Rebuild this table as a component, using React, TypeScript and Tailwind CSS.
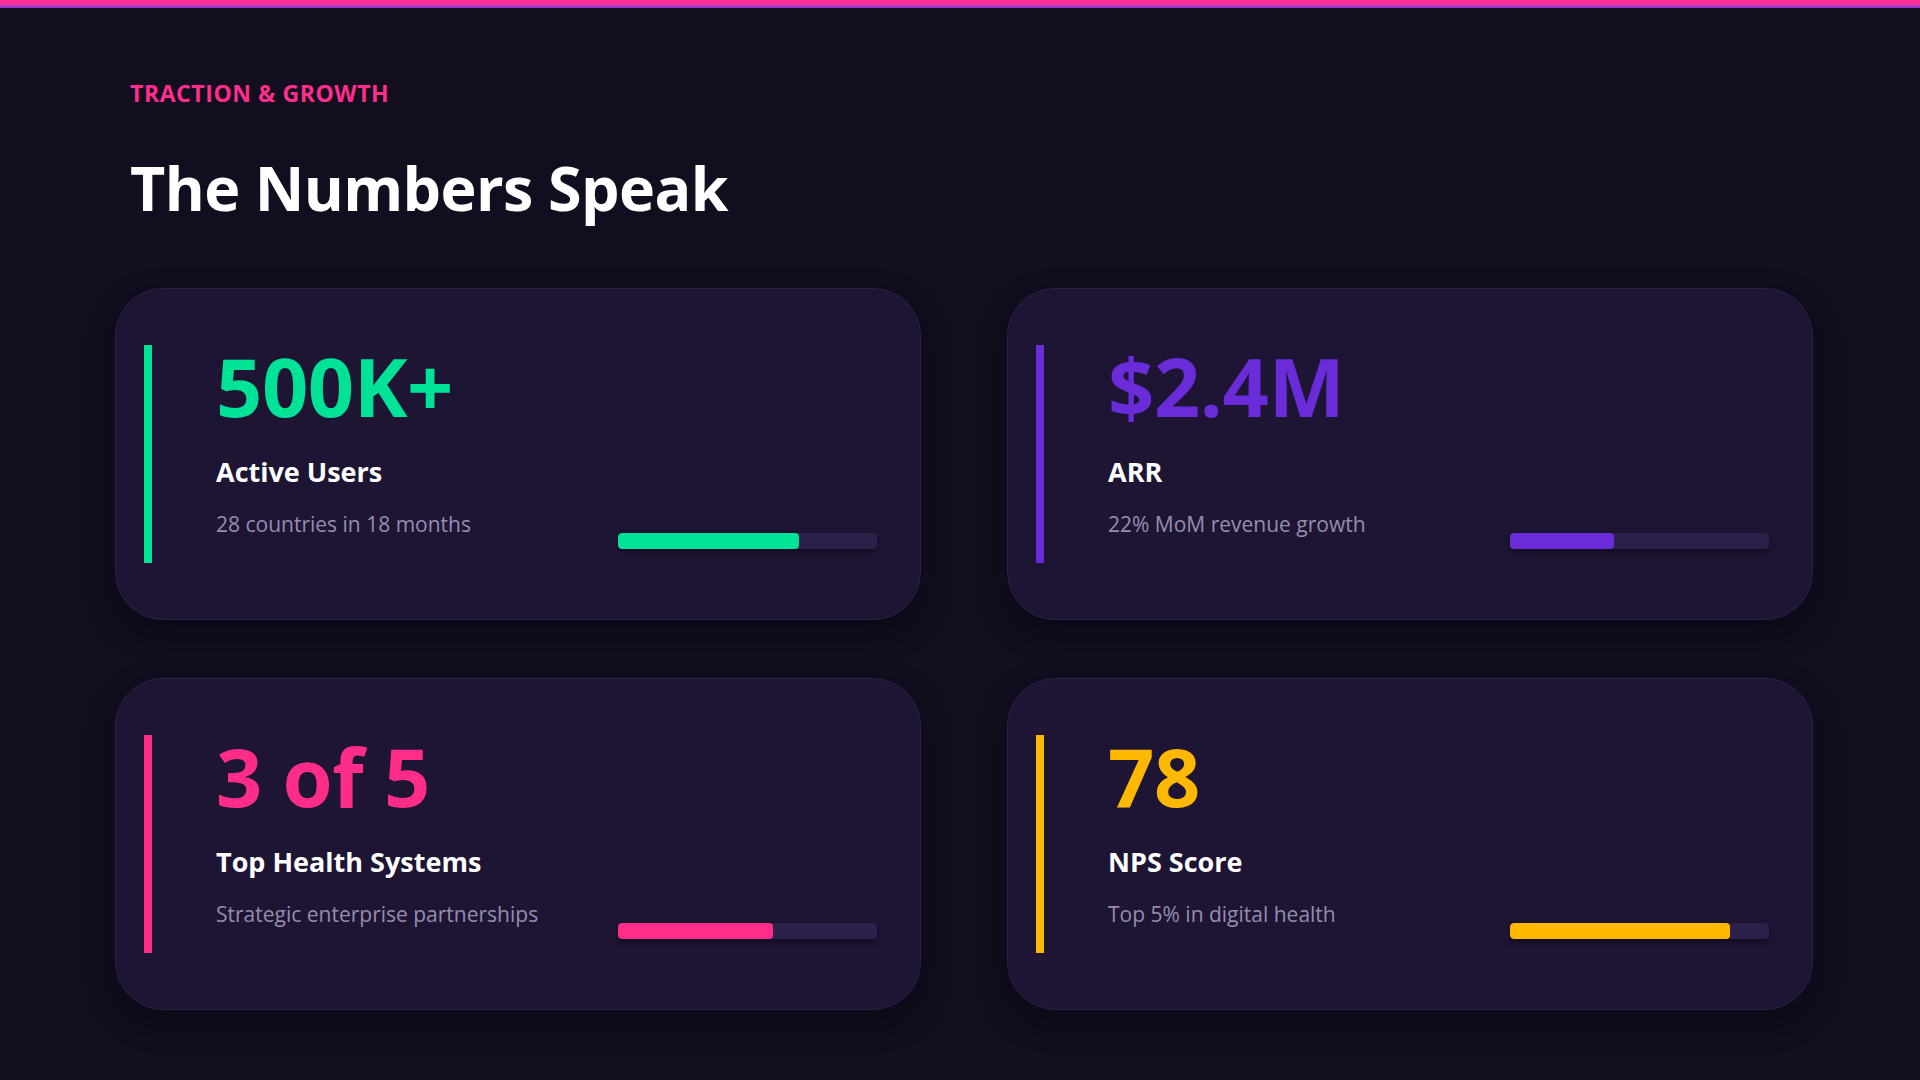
const METRICS = [
  {
    value: "500K+",
    label: "Active Users",
    note: "28 countries in 18 months",
    text: "text-[#00e396]",
    bar: "border-[#00e396]",
    fill: "bg-[#00e396]",
    pct: 70,
  },
  {
    value: "$2.4M",
    label: "ARR",
    note: "22% MoM revenue growth",
    text: "text-[#6a2bd9]",
    bar: "border-[#6a2bd9]",
    fill: "bg-[#6a2bd9]",
    pct: 40,
  },
  {
    value: "3 of 5",
    label: "Top Health Systems",
    note: "Strategic enterprise partnerships",
    text: "text-[#ff2d87]",
    bar: "border-[#ff2d87]",
    fill: "bg-[#ff2d87]",
    pct: 60,
  },
  {
    value: "78",
    label: "NPS Score",
    note: "Top 5% in digital health",
    text: "text-[#ffb800]",
    bar: "border-[#ffb800]",
    fill: "bg-[#ffb800]",
    pct: 85,
  },
];

type Metric = (typeof METRICS)[number];

function MetricCard({ m }: { m: Metric }) {
  return (
    <div className="flex h-[332px] items-center rounded-[48px] border border-[#2a2248] bg-[#1e1535] pl-[28px] pr-[43px] shadow-[0_12px_30px_rgba(0,0,0,0.35)]">
      <div className="flex flex-1 items-end justify-between">
        <div className={`border-l-8 ${m.bar} pl-[64px] pb-[22px]`}>
          <div className={`text-[81px] font-bold leading-none tracking-[-0.005em] ${m.text}`}>
            {m.value}
          </div>
          <div className="mt-[30px] text-[27px] font-bold leading-[1.2] text-white">
            {m.label}
          </div>
          <div className="mt-[21px] text-[21px] leading-[1.5] text-[#968dae]">
            {m.note}
          </div>
        </div>
        <div className="mb-[14px] h-4 w-[259px] overflow-hidden rounded-[4px] bg-[#2a2049] shadow-[0_3px_6px_rgba(0,0,0,0.45)]">
          <div
            className={`h-full rounded-[4px] ${m.fill}`}
            style={{ width: `${m.pct}%` }}
          />
        </div>
      </div>
    </div>
  );
}

export default function App() {
  return (
    <div className="min-h-screen w-full bg-[#120d1f] font-['Open_Sans',sans-serif]">
      <div className="h-2 bg-gradient-to-b from-[#ff2d95] from-40% to-[#8a2fd6]" />
      <div className="pl-[115px] pr-[107px] pt-[74px] pb-[72px]">
        <p className="pl-[15px] text-[23px] font-bold leading-none tracking-[0.025em] text-[#ff2e8b]">
          TRACTION &amp; GROWTH
        </p>
        <h1 className="mt-[52px] pl-[15px] text-[61px] font-bold leading-none tracking-[-0.01em] text-white">
          The Numbers Speak
        </h1>
        <div className="mt-[70px] grid grid-cols-2 gap-x-[86px] gap-y-[58px]">
          {METRICS.map((m) => (
            <MetricCard key={m.label} m={m} />
          ))}
        </div>
      </div>
    </div>
  );
}
